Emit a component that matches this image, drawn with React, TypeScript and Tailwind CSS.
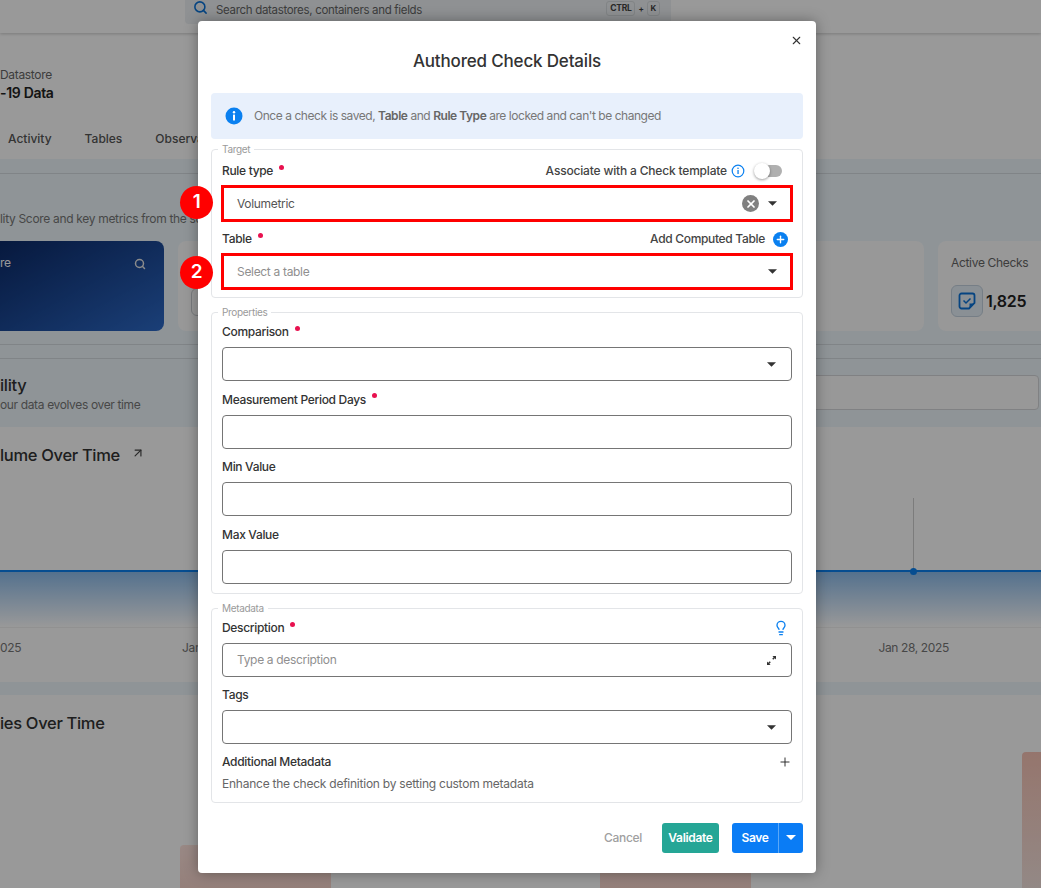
import React from 'react';
import { Lightbulb, Plus, Search, X, ArrowUpRight } from 'lucide-react';

const Caret = () => (
  <svg width="9" height="5" viewBox="0 0 10 5" className="shrink-0">
    <path d="M0 0h10L5 5z" fill="#333" />
  </svg>
);

const Dot = () => <span className="ml-[6px] -mt-[8px] h-[5px] w-[5px] rounded-full bg-[#e8114f]" />;

const Label = ({ text, required }: { text: string; required?: boolean }) => (
  <span className="flex items-center text-[12px] font-medium text-[#333]">
    {text}
    {required && <Dot />}
  </span>
);

const LabelRow = ({ children }: { children: React.ReactNode }) => (
  <div className="flex h-[20px] items-center justify-between">{children}</div>
);

const Input = ({ placeholder, caret, children }: { placeholder?: string; caret?: boolean; children?: React.ReactNode }) => (
  <div className="mt-[5px] flex h-[34px] items-center rounded-[4px] border border-[#757575] bg-white pl-[14px] pr-[15px]">
    <span className="flex-1 text-[12px] text-[#8f8f8f]">{placeholder}</span>
    {children}
    {caret && <Caret />}
  </div>
);

const HighlightedInput = ({ value, placeholder, children }: { value?: string; placeholder?: string; children?: React.ReactNode }) => (
  <div className="mx-[-1px] mt-[4px] flex h-[37px] items-center border-[3px] border-[#ff0000] bg-white pl-[13px] pr-[13px]">
    <span className={value ? 'flex-1 text-[12px] text-[#555]' : 'flex-1 text-[12px] text-[#8f8f8f]'}>{value || placeholder}</span>
    {children}
    <Caret />
  </div>
);

const Section = ({ title, children }: { title: string; children: React.ReactNode }) => (
  <fieldset className="rounded-[4px] border border-[#e3e5e8] px-[10px]">
    <legend className="ml-[-4px] px-[4px] text-[10px] leading-[12px] text-[#9a9a9a]">{title}</legend>
    {children}
  </fieldset>
);

const Marker = ({ n, top }: { n: number; top: string }) => (
  <div className={`absolute left-[180px] flex h-[33px] w-[33px] items-center justify-center rounded-full bg-[#ff0000] text-[19px] font-semibold text-white ${top}`}>
    {n}
  </div>
);

const Background = () => (
  <div className="flex h-[888px] w-[1041px] flex-col overflow-hidden bg-white text-[#333]">
    {/* top bar */}
    <div className="relative h-[33px] shrink-0 bg-white pl-[185px] shadow-[0_1px_3px_rgba(0,0,0,0.2)]">
      <div className="flex h-[24px] w-[486px] items-center rounded-b-[4px] bg-[#eef2f5] pl-[8px] pr-[11px]">
        <Search size={15} strokeWidth={2.5} className="-mt-[9px] text-[#0a72d8]" />
        <span className="ml-[8px] -mt-[3px] flex-1 text-[11.500px] text-[#666]">Search datastores, containers and fields</span>
        <span className="-mt-[7px] rounded-[3px] border border-[#d8dcdf] px-[3px] text-[8.500px] font-bold leading-[13px] text-[#444]">CTRL</span>
        <span className="mx-[3px] -mt-[7px] text-[8px] font-bold text-[#444]">+</span>
        <span className="-mt-[7px] rounded-[3px] border border-[#d8dcdf] px-[3px] text-[8px] font-bold leading-[13px] text-[#444]">K</span>
      </div>
    </div>

    {/* datastore header and tabs */}
    <div className="flex h-[126px] shrink-0 flex-col">
      <span className="mt-[33px] text-[12px] text-[#666]">Datastore</span>
      <span className="-mt-[2px] text-[14px] font-semibold text-[#222]">-19 Data</span>
      <div className="mt-[27px] flex gap-[33px] pl-[8px] text-[12px] font-medium tracking-normal text-[#555]">
        <span>Activity</span>
        <span>Tables</span>
        <span>Observability</span>
      </div>
    </div>

    {/* overview band */}
    <div className="flex h-[268px] shrink-0 flex-col bg-[#eef7fc]">
      <div className="mt-[14px] border-t border-[#d5dde2]" />
      <span className="mt-[37px] text-[12px] leading-[16px] text-[#777]">lity Score and key metrics from the source</span>
      <div className="mt-[14px] flex h-[90px] gap-[14px]">
        <div className="flex w-[164px] justify-between rounded-r-[8px] bg-gradient-to-br from-[#0c2a68] to-[#2d6ac8] py-[15px] pr-[18px]">
          <span className="text-[12px] leading-[14px] text-white">re</span>
          <Search size={12} strokeWidth={3} className="mt-[2px] text-[#e8e8e8]" />
        </div>
        <div className="w-[746px] rounded-[8px] bg-[#fdfdfd] pl-[13px] pt-[47px]">
          <div className="h-[28px] w-[30px] rounded-[6px] border border-[#c8ccd0]" />
        </div>
        <div className="flex-1 rounded-l-[8px] bg-[#fdfdfd] pl-[13px] pt-[15px]">
          <div className="text-[12px] leading-[14px] text-[#666]">Active Checks</div>
          <div className="mt-[15px] flex items-center gap-[3px]">
            <div className="flex h-[32px] w-[32px] items-center justify-center rounded-[6px] border border-[#c5d3e0] bg-[#e6f0f8]">
              <svg width="18" height="18" viewBox="0 0 18 18" fill="none" stroke="#0a72d8" strokeWidth="1.8">
                <path d="M11 16.500H3.500a2 2 0 0 1-2-2v-11a2 2 0 0 1 2-2h11a2 2 0 0 1 2 2V11z" />
                <path d="M5.500 8.500l2.500 2.500 4.500-4.500" strokeWidth="1.500" />
                <path d="M16.500 11.500L11.500 16.500v-5z" fill="#0a72d8" stroke="none" />
              </svg>
            </div>
            <span className="text-[16px] font-semibold text-[#222]">1,825</span>
          </div>
        </div>
      </div>
      <div className="mt-[13px] border-t border-[#d5dde2]" />
      <div className="mt-[13px] border-t border-[#d5dde2]" />
      <div className="flex items-start justify-between">
        <div>
          <div className="mt-[16px] text-[16.500px] font-medium leading-[20px] text-[#333]">ility</div>
          <div className="mt-[2px] text-[12px] leading-[16px] tracking-[-0.03em] text-[#777]">our data evolves over time</div>
        </div>
        <div className="mr-[2px] mt-[16px] h-[35px] w-[500px] rounded-[4px] border border-[#d5d8da] bg-[#fdfdfd]" />
      </div>
    </div>

    {/* volume chart */}
    <div className="flex h-[255px] shrink-0 flex-col">
      <div className="mt-[18px] flex items-center gap-[11px]">
        <span className="text-[16.500px] font-medium leading-[20px] text-[#333]">lume Over Time</span>
        <ArrowUpRight size={14} className="-mt-[4px] text-[#444]" />
      </div>
      <div className="relative mt-[105px] h-[57px] border-t-[2.500px] border-[#0a80f0] bg-gradient-to-b from-[#8dbdec] to-white">
        <div className="absolute bottom-[54px] left-[913px] h-[75px] w-px bg-[#cfcfcf]" />
        <div className="absolute left-[910px] top-[-4.500px] h-[7px] w-[7px] rounded-full bg-[#0a80f0]" />
      </div>
      <div className="border-t border-[#f2f2f2]" />
      <div className="mt-[13px] flex text-[12px] leading-[14px] tracking-[-0.03em] text-[#777]">
        <span>025</span>
        <span className="ml-[161px]">Jan 21, 2025</span>
        <span className="ml-[628px]">Jan 28, 2025</span>
      </div>
    </div>

    <div className="h-[13px] shrink-0 bg-[#eef7fc]" />

    {/* anomalies chart */}
    <div className="flex min-h-0 flex-1 flex-col">
      <div className="mt-[18px] text-[16.500px] font-medium leading-[20px] text-[#333]">ies Over Time</div>
      <div className="flex flex-1 items-end">
        <div className="ml-[180px] h-[43px] w-[151px] rounded-t-[4px] bg-gradient-to-b from-[#ffe4de] to-[#f8d5cc]" />
        <div className="ml-[269px] h-[43px] w-[151px] rounded-t-[4px] bg-gradient-to-b from-[#ffe4de] to-[#f8d5cc]" />
        <div className="ml-[271px] h-[136px] w-[19px] rounded-tl-[4px] bg-gradient-to-b from-[#f8c4b6] to-[#f6e4df]" />
      </div>
    </div>
  </div>
);

const Modal = () => (
  <div className="flex h-[852px] w-[618px] flex-col rounded-[4px] bg-white px-[13px] shadow-[0_0_14px_rgba(0,0,0,0.35)]">
    <div className="relative flex h-[72px] shrink-0 justify-center pt-[27px]">
      <span className="text-[17px] font-medium leading-[26px] tracking-[-0.01em] text-[#333]">Authored Check Details</span>
      <X size={13} strokeWidth={2} className="absolute right-[0px] top-[13px] text-[#333]" />
    </div>

    <div className="flex h-[46px] shrink-0 items-center rounded-[4px] bg-[#e8f0fc] pl-[14px] text-[12px] tracking-[-0.038em] text-[#777]">
      <svg width="18" height="18" viewBox="0 0 18 18" className="mr-[11px] shrink-0">
        <circle cx="9" cy="9" r="8.500" fill="#0a80f0" />
        <rect x="8" y="7.500" width="2" height="6" rx="0.600" fill="#fff" />
        <circle cx="9" cy="5.200" r="1.200" fill="#fff" />
      </svg>
      <span>
        Once a check is saved, <b className="font-semibold text-[#666]">Table</b> and <b className="font-semibold text-[#666]">Rule Type</b> are locked and can't be changed
      </span>
    </div>

    <div className="mt-[4px] flex flex-col gap-[8px]">
      <Section title="Target">
        <div className="pb-[7px] pt-[6px]">
          <LabelRow>
            <Label text="Rule type" required />
            <span className="flex items-center text-[12px] font-medium tracking-[-0.015em] text-[#444]">
              Associate with a Check template
              <svg width="14" height="14" viewBox="0 0 14 14" className="ml-[4px]" fill="none">
                <circle cx="7" cy="7" r="5.800" stroke="#0a80f0" strokeWidth="1.200" />
                <rect x="6.400" y="6" width="1.300" height="4" fill="#0a80f0" />
                <circle cx="7" cy="4.300" r="0.800" fill="#0a80f0" />
              </svg>
              <span className="relative ml-[11px] mr-[10px] h-[12px] w-[26px] rounded-full bg-[#b0b0b0]">
                <span className="absolute left-[-2px] top-[-2px] h-[16px] w-[16px] rounded-full bg-white shadow-[0_1px_3px_rgba(0,0,0,0.4)]" />
              </span>
            </span>
          </LabelRow>
          <HighlightedInput value="Volumetric">
            <span className="mr-[9px] flex h-[17px] w-[17px] items-center justify-center rounded-full bg-[#808080]">
              <X size={12} strokeWidth={3.500} className="text-white" />
            </span>
          </HighlightedInput>
          <div className="mt-[7px]">
            <LabelRow>
              <Label text="Table" required />
              <span className="flex items-center text-[12px] font-medium text-[#444]">
                Add Computed Table
                <span className="ml-[8px] mr-[4px] flex h-[15px] w-[15px] items-center justify-center rounded-full bg-[#0a80f0]">
                  <Plus size={11} strokeWidth={3} className="text-white" />
                </span>
              </span>
            </LabelRow>
          </div>
          <HighlightedInput placeholder="Select a table" />
        </div>
      </Section>

      <Section title="Properties">
        <div className="pb-[9.700px] pt-[4px]">
          <LabelRow>
            <Label text="Comparison" required />
          </LabelRow>
          <Input caret />
          <div className="mt-[8.500px]">
            <LabelRow>
              <Label text="Measurement Period Days" required />
            </LabelRow>
          </div>
          <Input />
          <div className="mt-[8.500px]">
            <LabelRow>
              <Label text="Min Value" />
            </LabelRow>
          </div>
          <Input />
          <div className="mt-[8.700px]">
            <LabelRow>
              <Label text="Max Value" />
            </LabelRow>
          </div>
          <Input />
        </div>
      </Section>

      <Section title="Metadata">
        <div className="pb-[11px] pt-[4px]">
          <LabelRow>
            <Label text="Description" required />
            <Lightbulb size={16} className="mr-[3px] text-[#0a80f0]" />
          </LabelRow>
          <Input placeholder="Type a description">
            <svg width="9" height="9" viewBox="0 0 10 10" fill="#333">
              <path d="M6 0h4v4L8.600 2.600 7 4.200 5.800 3 7.400 1.400zM0 10V6l1.400 1.400L3 5.800 4.200 7 2.600 8.600 4 10z" />
            </svg>
          </Input>
          <div className="mt-[8px]">
            <LabelRow>
              <Label text="Tags" />
            </LabelRow>
          </div>
          <Input caret />
          <div className="mt-[7.500px]">
            <LabelRow>
              <Label text="Additional Metadata" />
              <Plus size={14} strokeWidth={1.600} className="text-[#222]" />
            </LabelRow>
          </div>
          <div className="mt-[5px] text-[12px] leading-[14px] tracking-[-0.02em] text-[#666]">Enhance the check definition by setting custom metadata</div>
        </div>
      </Section>
    </div>

    <div className="mt-[20px] flex items-center justify-end text-[12px] font-semibold">
      <span className="font-medium text-[#a0a0a0]">Cancel</span>
      <span className="ml-[20px] flex h-[30px] w-[57px] items-center justify-center rounded-[3px] bg-[#25a696] text-white">Validate</span>
      <div className="ml-[13px] flex h-[30px] w-[71px] overflow-hidden rounded-[3px] bg-[#0a7cf5] text-white">
        <span className="flex w-[47px] items-center justify-center border-r border-[#5aa8f8]">Save</span>
        <span className="flex flex-1 items-center justify-center">
          <svg width="10" height="5" viewBox="0 0 10 5">
            <path d="M0 0h10L5 5z" fill="#fff" />
          </svg>
        </span>
      </div>
    </div>
  </div>
);

export default function App() {
  return (
    <div className="relative h-[888px] w-[1041px] overflow-hidden font-['Inter',sans-serif] tracking-[-0.02em]">
      <Background />
      <div className="absolute inset-0 bg-black/40 pl-[198px] pt-[21px]">
        <Modal />
      </div>
      <Marker n={1} top="top-[186px]" />
      <Marker n={2} top="top-[256px]" />
    </div>
  );
}
